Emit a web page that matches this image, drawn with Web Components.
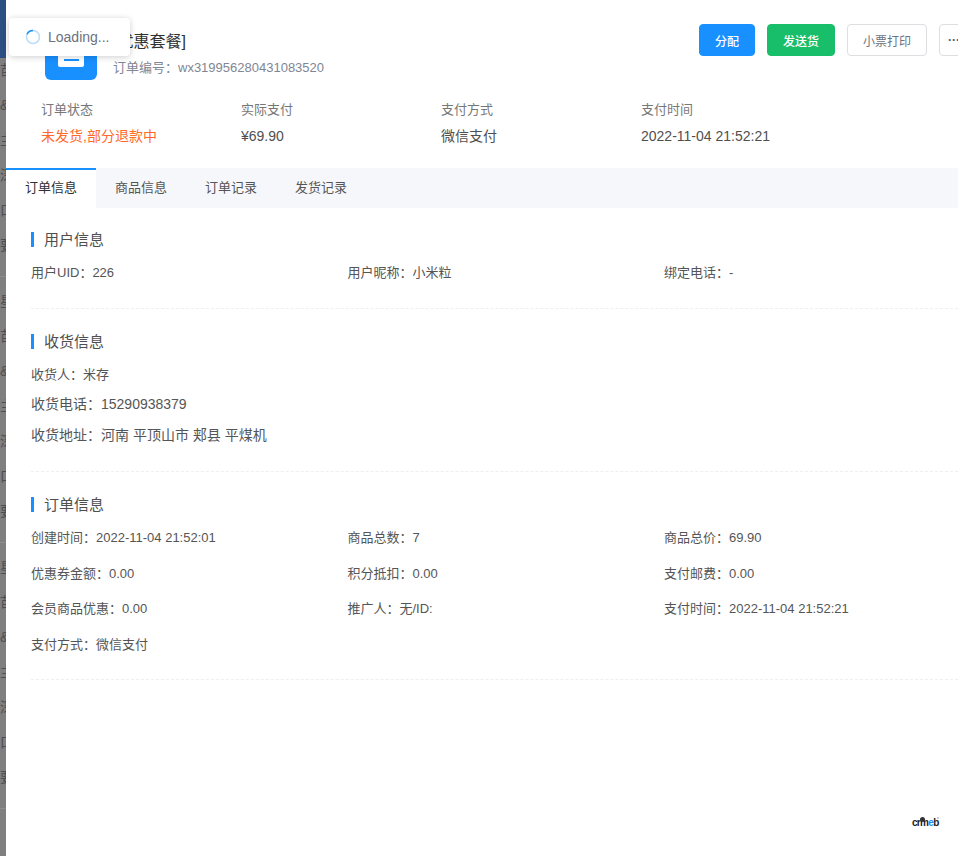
<!DOCTYPE html>
<html><head><meta charset="utf-8"><style>
html,body{margin:0;padding:0;height:856px;overflow:hidden;background:#fff}
body{font-family:"Liberation Sans","Noto Sans CJK SC",sans-serif;color:#515a6e}
</style></head><body>
<order-drawer></order-drawer>
<script>
const FONT='"Liberation Sans","Noto Sans CJK SC",sans-serif';
function def(name,html){customElements.define(name,class extends HTMLElement{
  constructor(){super();this.attachShadow({mode:'open'}).innerHTML=typeof html==='function'?html(this):html;}
});}
def('side-strip',()=>{
 const seq=['苗','&','主','深','口','要','-','星','苗','&','主','深','口','要','-','星','苗','&','主','深','口','要','-'];
 const items=seq.map(c=>c==='-'?'<i class="ln"></i>':`<b>${c}</b>`).join('');
 return `<style>:host{display:block;width:6px;height:856px;background:#7f7f7f;overflow:hidden;flex:none}
 .top{height:58px;background:#2b4f82}
 .col{display:flex;flex-direction:column;font:14px/35px ${FONT};color:#3a3a40;margin-top:-5px}
 b{font-weight:400;display:block;height:35px;margin-left:0;white-space:nowrap;width:20px;opacity:.7}
 .ln{display:block;height:1px;background:#8d8d8d;margin:13px 0 7px}
 </style><div class="top"></div><div class="col">${items}</div>`;
});
def('header-top',`<style>:host{display:flex;justify-content:space-between;align-items:flex-start;height:90px;box-sizing:border-box;padding:24px 0 0 39px}
 .l{display:flex;gap:16px}.ic{width:52px;height:56px;background:#1890ff;border-radius:6px;display:flex;justify-content:center}
 .sh{width:26px;height:26px;background:#fff;border-radius:2px;margin-top:17px;display:flex;align-items:flex-end;justify-content:center;padding-bottom:6px;box-sizing:border-box}
 .sh i{display:block;width:15px;height:2px;background:#1890ff}
 .t{font-size:16px;line-height:22px;color:#303133;margin-top:7px}.n{font-size:13px;line-height:20px;color:#808695;margin-top:5px}
 .b{display:flex;gap:12px;flex:none;margin-right:-15px}
 </style><div class="l"><div class="ic"><div class="sh"><i></i></div></div><div><div class="t">[优惠套餐]</div><div class="n">订单编号：wx319956280431083520</div></div></div>
 <div class="b"><slot></slot></div>`);
def('btn-x',`<style>:host{display:inline-flex;align-items:center;justify-content:center;height:32px;box-sizing:border-box;border-radius:4px;font-size:12px;padding:0 15px;border:1px solid #dcdee2;color:#6b7280;background:#fff;white-space:nowrap}
 :host([kind=blue]){background:#1890ff;border-color:#1890ff;color:#fff;font-weight:500}
 :host([kind=green]){background:#19be6b;border-color:#19be6b;color:#fff;font-weight:500}
 :host([kind=more]){padding:0 0 0 8px;width:34px;justify-content:flex-start;color:#515a6e;font-weight:700}
 </style><slot></slot>`);
def('stat-row',`<style>:host{display:grid;grid-template-columns:repeat(4,200px);padding:8px 0 0 35px;height:78px;box-sizing:border-box}</style><slot></slot>`);
def('stat-x',`<style>:host{display:block;font-size:14px}.a{color:#777;font-size:13px;line-height:20px;height:26px;margin-top:2px}.v{color:#4f4f4f;line-height:20px;white-space:nowrap}:host([warn]) .v{color:#ff6a2b}</style><div class="a"><slot name="k"></slot></div><div class="v"><slot></slot></div>`);
def('tab-bar',`<style>:host{display:flex;height:40px;background:#f5f7fa}</style><slot></slot>`);
def('tab-x',`<style>:host{display:block;box-sizing:border-box;height:40px;padding:0 19px;font-size:13px;line-height:39px;color:#555}
 :host([on]){background:#fff;color:#303133;border-top:2px solid #1890ff;line-height:36px;width:90px}</style><slot></slot>`);
def('info-sec',`<style>:host{display:block;margin-left:25px;border-bottom:1px dashed #eceff3;box-sizing:border-box}
 h3{margin:0;font-weight:400;font-size:15px;color:#4f4f4f;border-left:3px solid #1890ff;padding-left:10px;height:15px;line-height:15px;white-space:nowrap}
 .g{display:grid;grid-template-columns:repeat(3,316.5px)}
 </style><h3><slot name="t"></slot></h3><div class="g"><slot></slot></div>`);
def('info-i',`<style>:host{display:block;font-size:13px;line-height:20px;height:var(--h,30px);color:#555;white-space:nowrap}
 :host([big]){font-size:14px}</style><slot></slot>`);
def('load-msg',`<style>:host{position:absolute;left:9px;top:18px;width:121px;height:38px;box-sizing:border-box;background:#fff;border-radius:4px;box-shadow:0 1px 6px rgba(0,0,0,.2);display:flex;align-items:center;gap:7px;padding-left:16px;font-size:14px;color:#6b7280;z-index:5}
 svg{flex:none}</style><svg width="16" height="16" viewBox="0 0 16 16"><circle cx="8" cy="8" r="6.5" fill="none" stroke="#bcdcfb" stroke-width="1.5"/><path d="M2 5.2A6.5 6.5 0 0 1 8 1.5" fill="none" stroke="#1890ff" stroke-width="1.5"/></svg><span>Loading...</span>`);
def('crm-logo',`<style>:host{position:absolute;left:912px;top:815px;width:27px;height:14px;font:700 10px/16px "Liberation Sans",sans-serif;color:#1b1b1f;letter-spacing:-.7px;white-space:nowrap}
 b{color:#1890ff}i{position:absolute;border-radius:50%}
 .h{left:8px;top:2px;width:5px;height:5px;background:#333}.r{left:25px;top:2px;width:2px;height:2px;background:#bbb}</style>
 crm<b>e</b>b<i class="h"></i><i class="r"></i>`);
def('order-drawer',()=>{
 const it=(t,h)=>`<info-i style="--h:${h}px">${t}</info-i>`;
 return `<style>:host{display:flex;height:856px;position:relative;overflow:hidden}main{flex:1;min-width:0;background:#fff}
 </style><side-strip></side-strip><main>
 <header-top><btn-x kind="blue">分配</btn-x><btn-x kind="green">发送货</btn-x><btn-x>小票打印</btn-x><btn-x kind="more">···</btn-x></header-top>
 <stat-row>
  <stat-x warn><span slot="k">订单状态</span>未发货,部分退款中</stat-x>
  <stat-x><span slot="k">实际支付</span>¥69.90</stat-x>
  <stat-x><span slot="k">支付方式</span>微信支付</stat-x>
  <stat-x><span slot="k">支付时间</span>2022-11-04 21:52:21</stat-x>
 </stat-row>
 <tab-bar><tab-x on>订单信息</tab-x><tab-x>商品信息</tab-x><tab-x>订单记录</tab-x><tab-x>发货记录</tab-x></tab-bar>
 <info-sec style="margin-top:24px;height:77px"><span slot="t">用户信息</span>
   <info-i style="margin-top:16px">用户UID：226</info-i><info-i style="margin-top:16px">用户昵称：小米粒</info-i><info-i style="margin-top:16px">绑定电话：-</info-i></info-sec>
 <info-sec style="margin-top:25px;height:138px"><span slot="t">收货信息</span>
   <info-i style="margin-top:16px;grid-column:1/4">收货人：米存</info-i><info-i big style="grid-column:1/4;margin-top:-1px">收货电话：15290938379</info-i><info-i big style="grid-column:1/4;margin-top:1px">收货地址：河南 平顶山市 郏县 平煤机</info-i></info-sec>
 <info-sec style="margin-top:25px;height:183px"><span slot="t">订单信息</span>
   <info-i style="margin-top:16px;--h:36px">创建时间：2022-11-04 21:52:01</info-i><info-i style="margin-top:16px;--h:36px">商品总数：7</info-i><info-i style="margin-top:16px;--h:36px">商品总价：69.90</info-i>
   ${it('优惠券金额：0.00',35)}${it('积分抵扣：0.00',35)}${it('支付邮费：0.00',35)}
   ${it('会员商品优惠：0.00',36)}${it('推广人：无/ID:',36)}${it('支付时间：2022-11-04 21:52:21',36)}
   ${it('支付方式：微信支付',30)}</info-sec>
 </main><load-msg></load-msg><crm-logo></crm-logo>`;
});
</script></body></html>
